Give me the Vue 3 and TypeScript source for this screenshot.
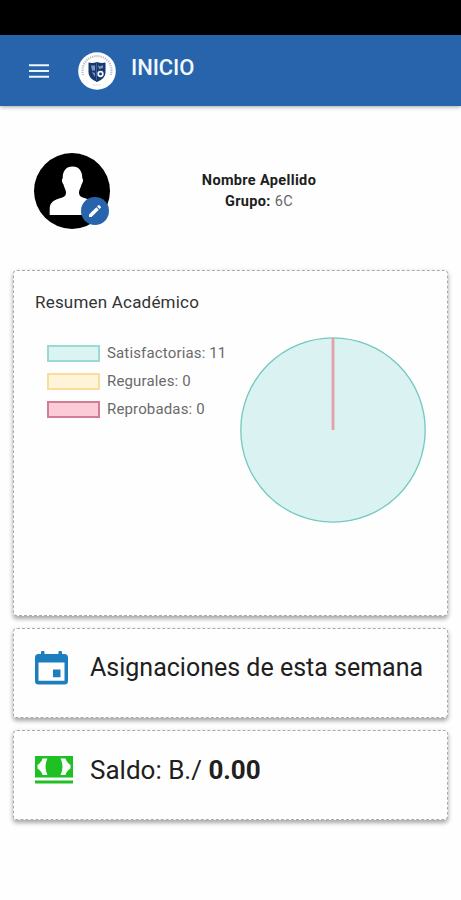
<script setup lang="ts">
interface LegendItem {
  label: string
  count: number
  tone: string
}

const legend: LegendItem[] = [
  { label: 'Satisfactorias', count: 11, tone: 'teal' },
  { label: 'Regurales', count: 0, tone: 'yellow' },
  { label: 'Reprobadas', count: 0, tone: 'red' },
]
</script>

<template>
  <div class="screen">
    <div class="status-bar"></div>
    <header class="toolbar">
      <svg class="menu" viewBox="0 0 20 14" aria-hidden="true">
        <path d="M0 1.2h20M0 7h20M0 12.8h20" stroke="#e9f6ff" stroke-width="2.1" />
      </svg>
      <svg class="crest" viewBox="0 0 38 38" aria-hidden="true">
        <circle cx="19" cy="19" r="18.8" fill="#fff" />
        <path d="M5.2 23A14.5 14.5 0 1 1 32.8 23" fill="none" stroke="#b4bec9" stroke-width="2.2" stroke-dasharray="1.2 1" />
        <path d="M15 33h8" stroke="#dce2e8" stroke-width="1.6" stroke-dasharray="1.5 1" />
        <path d="M10.500 10.500q4 1 8.500-.5 4.500 1.500 8.500.5v10q0 6-8.500 9.500-8.500-3.500-8.500-9.500z" fill="#17376f" />
        <path d="M13 13.500h4v5h-3zM14 20l3 1v4zM20 13l2 1.500 3-1.500v3l-4 1z" fill="#7d99bf" />
        <circle cx="22.500" cy="22" r="2.300" fill="#17376f" stroke="#f4f8ff" stroke-width="1.700" />
        <path d="M18.500 11v17" stroke="#4b6c9e" stroke-width=".8" />
      </svg>
      <h1>INICIO</h1>
    </header>

    <main>
      <section class="profile">
        <div class="avatar">
          <svg class="portrait" viewBox="0 0 76 76" aria-hidden="true">
            <circle cx="38" cy="38" r="38" fill="#000" />
            <path d="M38.500 13.500c-6.500 0-10 4.500-9.800 12-1.200.3-1 3.500.8 6 .7 3.500 2.500 5 2.500 8 0 2.800-1.500 4.500-4.500 5.200-6.500 1.700-11.800 4.300-11.800 10.800V62h45.600v-6.500c0-6.500-5.300-9.100-11.800-10.800-3-.7-4.500-2.400-4.500-5.200 0-3 1.800-4.500 2.500-8 1.800-2.500 2-5.700.8-6 .2-7.500-3.300-12-9.800-12z" fill="#fff" />
          </svg>
          <span class="edit">
            <svg viewBox="0 0 24 24" aria-hidden="true">
              <path d="M3 17.250V21h3.750L17.810 9.940l-3.750-3.750zM20.710 7.040a1 1 0 0 0 0-1.410l-2.340-2.340a1 1 0 0 0-1.410 0l-1.830 1.830 3.750 3.750z" fill="#fff" />
            </svg>
          </span>
        </div>
        <div class="identity">
          <strong class="name">Nombre Apellido</strong>
          <span class="group"><strong>Grupo:</strong> 6C</span>
        </div>
      </section>

      <section class="card summary">
        <h2>Resumen Académico</h2>
        <div class="chart">
          <ul class="legend">
            <li v-for="item in legend" :key="item.label">
              <i :class="['swatch', item.tone]"></i>
              <span>{{ item.label }}: {{ item.count }}</span>
            </li>
          </ul>
          <svg class="pie" viewBox="0 0 188 188" aria-hidden="true">
            <circle cx="94" cy="94" r="92.200" fill="#daf2f2" stroke="#72c9bd" stroke-width="1.300" />
            <path d="M94 2v92" stroke="#e3a0aa" stroke-width="2.800" />
          </svg>
        </div>
      </section>

      <section class="card row">
        <svg class="calendar" viewBox="0 0 33 34" aria-hidden="true">
          <path d="M6 1.500a1.700 1.700 0 0 1 3.500 0V3h14V1.500a1.700 1.700 0 0 1 3.500 0V3h2.500Q33 3 33 6.500V30q0 3.500-3.500 3.500h-26Q0 33.500 0 30V6.500Q0 3 3.500 3H6zM3.500 11.500v18.300h26V11.500zM18 18.500h7.500v7.800H18z" fill="#1d7ebd" fill-rule="evenodd" />
        </svg>
        <span class="label tasks">Asignaciones de esta semana</span>
      </section>

      <section class="card row">
        <svg class="cash" viewBox="0 0 38 28" aria-hidden="true">
          <path d="M0 0h38v21.500H0zM0 24.500h38v3H0z" fill="#1fc023" />
          <path d="M7.500 2.500h5q-4 8.200 0 16.500h-5Q7 15.500 2.500 12.500V9Q7 6 7.500 2.500zM30.500 2.500h-5q4 8.200 0 16.500h5q.5-3.500 5-6.500V9Q31 6 30.500 2.500z" fill="#fff" />
        </svg>
        <span class="label balance">Saldo: B./ <strong>0.00</strong></span>
      </section>
    </main>
  </div>
</template>

<style>
body {
  background: #fff;
}
</style>

<style scoped>
.screen {
  height: 900px;
  overflow: hidden;
  background: #fefefe;
  color: #202020;
  font-family: Roboto, "Liberation Sans", sans-serif;
}
.status-bar {
  height: 35px;
  background: #000;
}
.toolbar {
  box-sizing: border-box;
  height: 71px;
  padding-left: 29px;
  display: flex;
  align-items: center;
  background: #2864ab;
  box-shadow: 0 1px 4px rgba(0, 0, 0, 0.35);
}
.menu {
  width: 20px;
  height: 14px;
}
.crest {
  width: 38px;
  height: 38px;
  margin-left: 29px;
}
h1 {
  margin: 0 0 5px 15px;
  color: #f1f8ff;
  font-size: 22px;
  line-height: 28px;
  font-weight: 500;
  letter-spacing: -0.1px;
}
.profile {
  display: flex;
  height: 117px;
  padding: 47px 0 0 34px;
}
.avatar {
  position: relative;
  width: 76px;
  height: 76px;
}
.portrait {
  display: block;
  width: 76px;
  height: 76px;
}
.edit {
  position: absolute;
  right: 1px;
  bottom: 4px;
  width: 28px;
  height: 28px;
  border-radius: 50%;
  background: #2864ab;
  display: flex;
  align-items: center;
  justify-content: center;
}
.edit svg {
  width: 16px;
  height: 16px;
}
.identity {
  display: flex;
  flex-direction: column;
  align-items: center;
  width: 298px;
  padding-top: 17px;
  font-size: 14.500px;
  line-height: 21px;
  letter-spacing: 0.35px;
}
.identity strong {
  font-weight: 700;
}
.group {
  color: #666;
}
.group strong {
  color: #202020;
}
.card {
  box-sizing: border-box;
  margin: 0 13px 12px;
  border: 1px dashed #aaa;
  border-radius: 4px;
  background: #fefefe;
  box-shadow: 0 3px 4px rgba(0, 0, 0, 0.3), 0 1px 6px rgba(0, 0, 0, 0.08);
}
.summary {
  height: 346px;
  padding: 20px 20px 0 21px;
}
h2 {
  margin: 0;
  color: #333;
  font-size: 17px;
  line-height: 22px;
  font-weight: 400;
  letter-spacing: 0.2px;
}
.chart {
  display: flex;
  justify-content: space-between;
  padding-top: 24px;
}
.legend {
  margin: 0;
  padding: 2px 0 0 12px;
  list-style: none;
}
.legend li {
  display: flex;
  align-items: center;
  gap: 7px;
  height: 28px;
  color: #6a6a6a;
  font-size: 15px;
  line-height: 20px;
  letter-spacing: 0.15px;
  white-space: nowrap;
}
.swatch {
  box-sizing: border-box;
  width: 53px;
  height: 17px;
  border: 2px solid;
}
.teal {
  border-color: #9bd9d5;
  background: #daf4f2;
}
.yellow {
  border-color: #f8de9a;
  background: #fff3d9;
}
.red {
  border-color: #d37b98;
  background: #fbcbd7;
}
.pie {
  flex: none;
  width: 188px;
  height: 188px;
  margin-top: -1px;
}
.row {
  display: flex;
  align-items: flex-start;
  height: 90px;
  padding: 22px 20px 0 21px;
}
.calendar {
  flex: none;
  width: 33px;
  height: 34px;
}
.cash {
  flex: none;
  width: 38px;
  height: 28px;
  margin-top: 3px;
}
.label {
  font-size: 25px;
  line-height: 32px;
  white-space: nowrap;
}
.tasks {
  margin: 1px 0 0 22px;
}
.balance {
  margin: 0 0 0 17px;
  font-size: 26px;
  line-height: 34px;
}
.balance strong {
  font-weight: 700;
}
</style>
